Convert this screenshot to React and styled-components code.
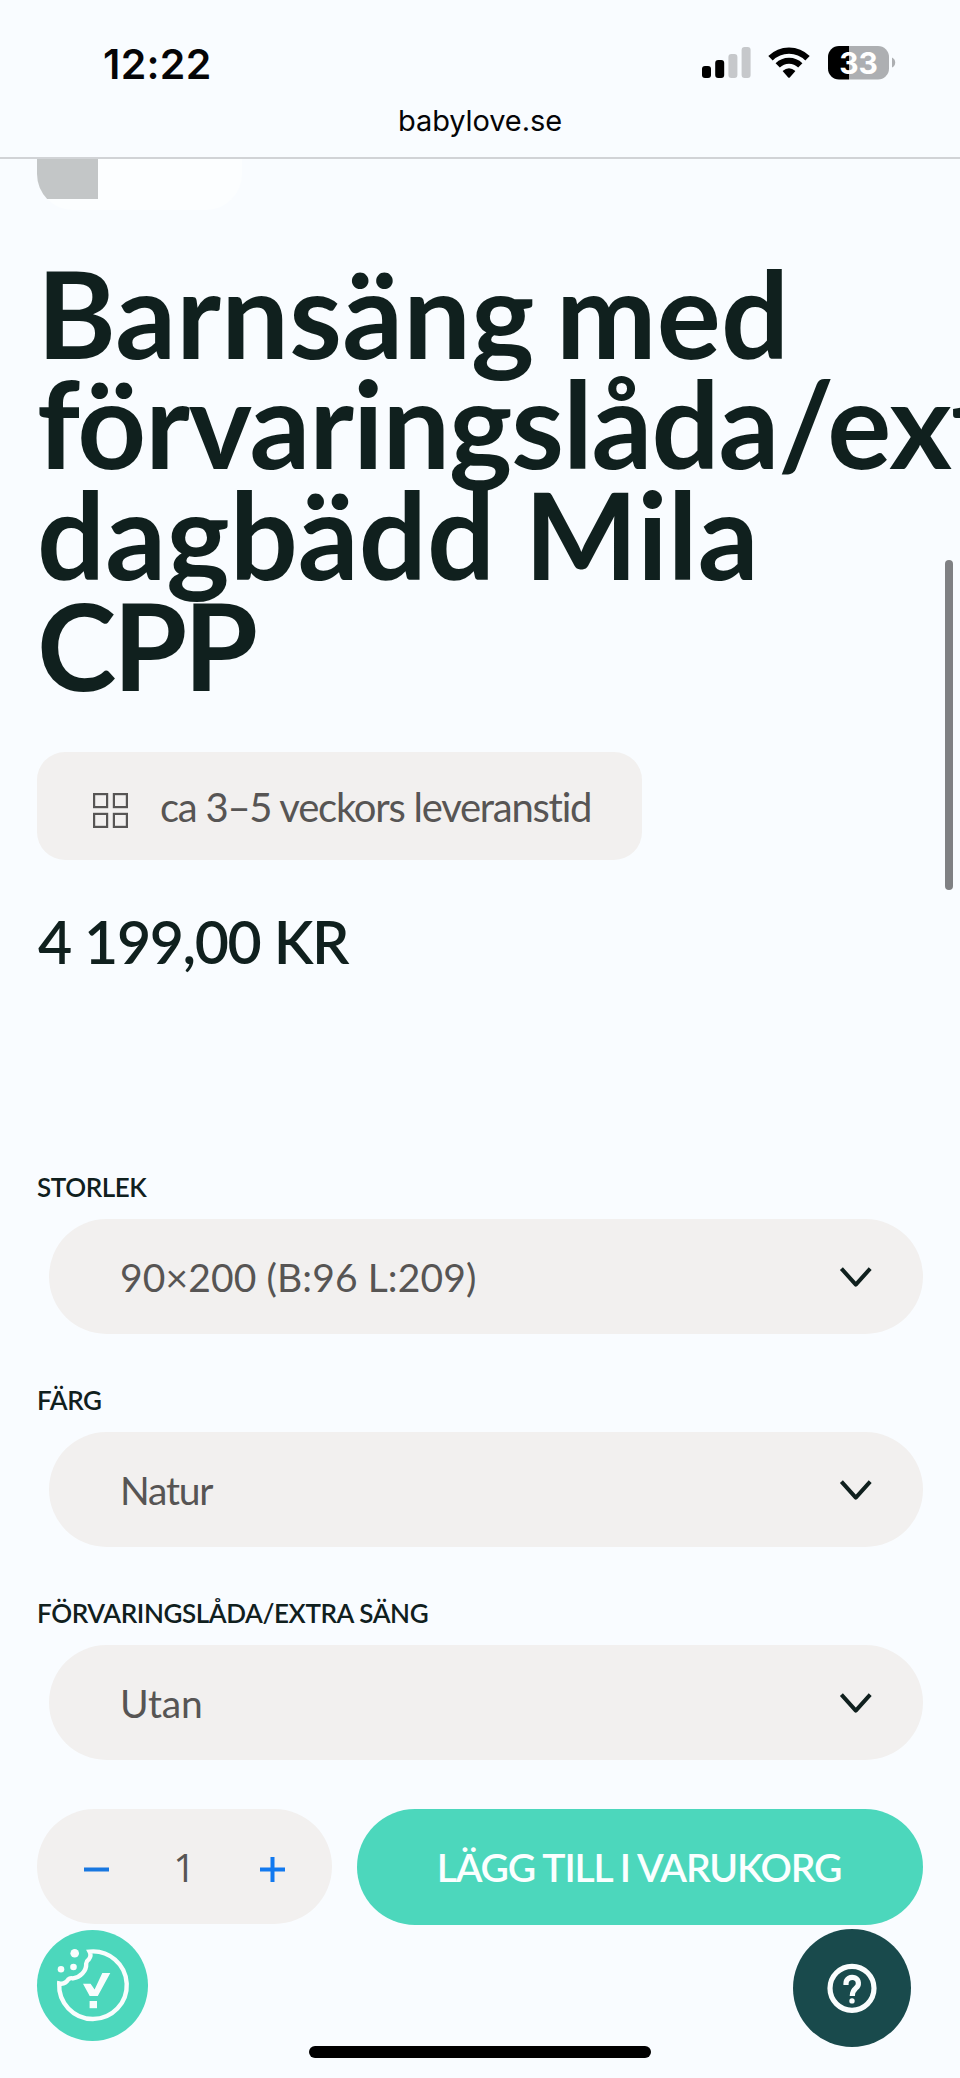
import React, { useState } from 'react';
import styled, { createGlobalStyle } from 'styled-components';

const ink = '#10201e';
const sand = '#f2f0ef';
const mint = '#4cd7bc';

const GlobalStyle = createGlobalStyle`
  * { box-sizing: border-box; }
  html, body { margin: 0; padding: 0; background: #f9fcff; }
  body { font-family: Lato, 'Open Sans', sans-serif; color: ${ink}; }
  button { font: inherit; border: 0; padding: 0; background: none; cursor: pointer; }
`;

const Screen = styled.div`
  position: relative;
  width: 960px;
  height: 2078px;
  overflow: hidden;
  background: #f9fcff;
`;

const Header = styled.header`
  height: 159px;
  border-bottom: 2px solid #d1d3d6;
  font-family: Inter, 'Liberation Sans', sans-serif;
  color: #050507;
`;

const StatusBar = styled.div`
  display: flex;
  justify-content: space-between;
  align-items: center;
  height: 98px;
  padding: 30px 62px 0 103px;
`;

const Clock = styled.time`
  font-size: 41px;
  font-weight: 600;
  line-height: 68px;
  letter-spacing: 0.3px;
`;

const StatusIcons = styled.svg`
  display: block;
  width: 196px;
  height: 36px;
  margin-bottom: 2px;
`;

const Address = styled.div`
  height: 45px;
  text-align: center;
  font-size: 29px;
  line-height: 46px;
  letter-spacing: -0.1px;
`;

const Gallery = styled.div`
  width: 205px;
  height: 51px;
  margin-left: 37px;
  border-radius: 0 0 36px 36px;
  background: #fcfeff;
  overflow: hidden;
`;

const Thumb = styled.div`
  width: 61px;
  height: 40px;
  background: #c3c6c7;
`;

const Content = styled.main`
  padding: 47.5px 37px 0;
`;

const Title = styled.h1`
  margin: 0;
  font-size: 120px;
  font-weight: 700;
  line-height: 110.67px;
`;

const TitleLine = styled.span`
  display: block;
  white-space: nowrap;
  letter-spacing: ${(p) => p.$tracking}px;
  word-spacing: ${(p) => p.$gap || 0}px;
`;

const Delivery = styled.div`
  display: flex;
  align-items: center;
  width: 605px;
  height: 108px;
  margin-top: 51.8px;
  padding-left: 56px;
  gap: 32px;
  border-radius: 28px;
  background: ${sand};
  color: #575554;
  font-size: 40px;
  letter-spacing: -1.25px;
  white-space: nowrap;

  svg { width: 35px; height: 35px; margin-top: 9px; }
  span { padding-top: 2px; }
`;

const Price = styled.div`
  height: 80px;
  margin-top: 42px;
  padding-left: 1px;
  font-size: 59px;
  font-weight: 600;
  line-height: 80px;
  letter-spacing: -1.4px;
`;

const Options = styled.div`
  display: flex;
  flex-direction: column;
  gap: 48.5px;
  margin-top: 187.5px;
`;

const Field = styled.div`
  display: flex;
  flex-direction: column;
`;

const Label = styled.label`
  height: 50px;
  font-size: 26px;
  font-weight: 600;
  line-height: 37px;
  letter-spacing: -0.4px;
`;

const Select = styled.button`
  display: flex;
  align-items: center;
  justify-content: space-between;
  height: 114.5px;
  margin-left: 12px;
  padding: 0 50px 0 71px;
  border-radius: 58px;
  background: ${sand};
  color: #575554;
  text-align: left;

  && { font-size: 39px; letter-spacing: ${(p) => p.$tracking}px; }
  svg { width: 34px; height: 23px; margin-top: 1px; }
`;

const BuyRow = styled.div`
  display: flex;
  gap: 25px;
  margin-top: 49px;
`;

const Quantity = styled.div`
  display: flex;
  align-items: center;
  justify-content: space-between;
  width: 295px;
  height: 115px;
  padding: 0 46px;
  border-radius: 58px;
  background: ${sand};
  color: #575554;
  font-family: 'Open Sans', Lato, sans-serif;
  font-size: 39px;
`;

const Step = styled.button`
  width: 27px;
  height: 27px;
  margin-top: 6px;

  svg { display: block; width: 27px; height: 27px; }
`;

const AddToCart = styled.button`
  flex: 1;
  height: 116px;
  border-radius: 58px;

  && {
    padding-right: 2px;
    background: ${mint};
    color: #fbffff;
    font-size: 39px;
    font-weight: 600;
    letter-spacing: -1.18px;
    white-space: nowrap;
  }
`;

const FloatingButton = styled.button`
  position: absolute;
  left: ${(p) => p.$left}px;
  top: ${(p) => p.$top}px;
  width: ${(p) => p.$size}px;
  height: ${(p) => p.$size}px;

  && { border-radius: 50%; background: ${(p) => p.$color}; }
  svg { display: block; width: 100%; height: 100%; }
`;

const ScrollThumb = styled.div`
  position: absolute;
  top: 560px;
  right: 7px;
  width: 8px;
  height: 330px;
  border-radius: 4px;
  background: #7f8083;
`;

const HomeIndicator = styled.div`
  position: absolute;
  left: 309px;
  bottom: 20px;
  width: 342px;
  height: 12px;
  border-radius: 6px;
  background: #000;
`;

const DeviceStatus = () => (
  <StatusIcons viewBox="702 46 196 36">
    <rect x="702" y="67" width="9" height="12" rx="3" fill="#000" />
    <rect x="715.2" y="61" width="9" height="18" rx="3" fill="#000" />
    <rect x="728.4" y="55" width="9" height="24" rx="3" fill="#c6c8cb" />
    <rect x="741.6" y="48" width="9" height="31" rx="3" fill="#c6c8cb" />
    <path d="M770.5 59.3 A26 26 0 0 1 807.5 59.3" fill="none" stroke="#000" strokeWidth="6.2" />
    <path d="M777.7 66.3 A16 16 0 0 1 800.3 66.3" fill="none" stroke="#000" strokeWidth="6" />
    <path d="M782.6 72 Q789 66.4 795.4 72 L790 78.2 Q789 79.2 788 78.2 Z" fill="#000" />
    <path d="M849 47 H878 a11 11 0 0 1 11 11 V69.5 a11 11 0 0 1 -11 11 H849 Z" fill="#adafb2" />
    <path d="M849 47 H839 a11 11 0 0 0 -11 11 V69.5 a11 11 0 0 0 11 11 H849 Z" fill="#000" />
    <path d="M892 58.5 Q895.2 60 895.2 63.5 Q895.2 67 892 68.5 Z" fill="#adafb2" />
    <text x="858.5" y="75" textAnchor="middle" fontFamily="Inter, sans-serif" fontSize="30" fontWeight="700" fill="#fff">33</text>
  </StatusIcons>
);

const GridIcon = () => (
  <svg viewBox="0 0 35 35" fill="none" stroke="#575554" strokeWidth="2.2">
    <rect x="1.1" y="1.1" width="13" height="13" />
    <rect x="20.9" y="1.1" width="13" height="13" />
    <rect x="1.1" y="20.9" width="13" height="13" />
    <rect x="20.9" y="20.9" width="13" height="13" />
  </svg>
);

const Chevron = () => (
  <svg viewBox="0 0 34 23" fill="none" stroke={ink} strokeWidth="4" strokeLinejoin="round">
    <path d="M2.4 2.6 L16.8 18.6 L31.2 2.6" />
  </svg>
);

const CookieIcon = () => (
  <svg viewBox="37 1930 111 111">
    <path
      d="M89.6 1951.6 A33.8 33.8 0 1 1 59.2 1983.4 Q65 1984.8 68.5 1979.2 Q70 1977.6 73 1978.4 C80 1977.4 86.6 1971.4 86.2 1963.6 Q86.2 1961.4 88.6 1959.6 Q91.8 1955.6 89.6 1951.6 Z"
      fill="none"
      stroke="#f9fdfd"
      strokeWidth="4.4"
    />
    <circle cx="74.7" cy="1953.3" r="4.3" fill="#f9fdfd" />
    <circle cx="73.5" cy="1967" r="3.3" fill="#f9fdfd" />
    <circle cx="61" cy="1969.3" r="3.3" fill="#f9fdfd" />
    <path d="M83 1983.7 H90.6 L94.6 1989.5 L102.3 1973 H110.3 L97.8 1996 H89.7 Z" fill="#f9fdfd" />
    <rect x="89.6" y="2001" width="7.4" height="7.2" fill="#f9fdfd" />
  </svg>
);

const HelpIcon = () => (
  <svg viewBox="0 0 118 118" fill="none" stroke="#fafdfd" strokeWidth="5.2">
    <circle cx="59" cy="59.3" r="22" />
    <path d="M53 56 V54.5 A6.2 6 0 1 1 62.8 59.2 Q59.3 62 59.3 67" />
    <circle cx="59" cy="71.9" r="2.7" fill="#fafdfd" stroke="none" />
  </svg>
);

const titleLines = [
  ['Barnsäng med', 0.2, -8],
  ['förvaringslåda/extra', -1.1],
  ['dagbädd Mila', 0.1],
  ['CPP', -3.4],
];

const options = [
  ['STORLEK', '90×200 (B:96 L:209)', 0.11],
  ['FÄRG', 'Natur', -1.2],
  ['FÖRVARINGSLÅDA/EXTRA SÄNG', 'Utan', -0.2],
];

export default function App() {
  const [count, setCount] = useState(1);
  return (
    <Screen>
      <GlobalStyle />
      <Header>
        <StatusBar>
          <Clock>12:22</Clock>
          <DeviceStatus />
        </StatusBar>
        <Address>babylove.se</Address>
      </Header>
      <Gallery>
        <Thumb />
      </Gallery>
      <Content>
        <Title>
          {titleLines.map(([text, tracking, gap]) => (
            <TitleLine key={text} $tracking={tracking} $gap={gap}>{text}</TitleLine>
          ))}
        </Title>
        <Delivery>
          <GridIcon />
          <span>ca 3–5 veckors leveranstid</span>
        </Delivery>
        <Price>4 199,00 KR</Price>
        <Options>
          {options.map(([label, value, tracking]) => (
            <Field key={label}>
              <Label>{label}</Label>
              <Select $tracking={tracking}>
                <span>{value}</span>
                <Chevron />
              </Select>
            </Field>
          ))}
        </Options>
        <BuyRow>
          <Quantity>
            <Step aria-label="Minska" onClick={() => setCount(Math.max(1, count - 1))}>
              <svg viewBox="0 0 27 27"><path d="M1 13.5 H26" stroke="#1877e0" strokeWidth="4" /></svg>
            </Step>
            <span>{count}</span>
            <Step aria-label="Öka" onClick={() => setCount(count + 1)}>
              <svg viewBox="0 0 27 27"><path d="M1 13.5 H26 M13.5 1 V26" stroke="#1279ef" strokeWidth="4" /></svg>
            </Step>
          </Quantity>
          <AddToCart>LÄGG TILL I VARUKORG</AddToCart>
        </BuyRow>
      </Content>
      <FloatingButton $left={37} $top={1930} $size={111} $color={mint} aria-label="Cookies">
        <CookieIcon />
      </FloatingButton>
      <FloatingButton $left={793} $top={1929} $size={118} $color="#194a4c" aria-label="Hjälp">
        <HelpIcon />
      </FloatingButton>
      <ScrollThumb />
      <HomeIndicator />
    </Screen>
  );
}
